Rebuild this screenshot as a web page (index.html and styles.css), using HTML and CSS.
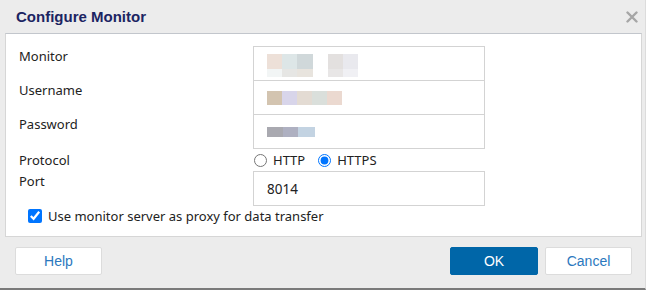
FILE: index.html
```html
<!DOCTYPE html>
<html lang="en">
<head>
    <meta charset="UTF-8">
    <title>Configure Monitor</title>
    <link rel="stylesheet" href="styles.css">
</head>
<body>
    <div class="dialog">
        <header class="titleBar">
            <span class="title">Configure Monitor</span>
            <svg class="closeBtn" width="12" height="12" viewBox="0 0 12 12">
                <path d="M1.5 1.5 L10.5 10.5 M10.5 1.5 L1.5 10.5" stroke="#a6a6a6" stroke-width="2.4" stroke-linecap="round"/>
            </svg>
        </header>
        <section class="panel">
            <div class="formRow">
                <label class="fieldLabel">Monitor</label>
                <div class="field">
                    <span class="blur blurMonitor">
                        <i class="c1"></i><i class="c2"></i><i class="c3"></i>
                        <i class="c4"></i><i class="c5"></i><i class="c6"></i>
                    </span>
                    <span class="blur blurMonitor2">
                        <i class="c7"></i><i class="c8"></i>
                        <i class="c9"></i><i class="c10"></i>
                    </span>
                </div>
            </div>
            <div class="formRow stacked">
                <label class="fieldLabel">Username</label>
                <div class="field">
                    <span class="blur blurUser">
                        <i class="u1"></i><i class="u2"></i><i class="u3"></i><i class="u4"></i><i class="u5"></i>
                    </span>
                </div>
            </div>
            <div class="formRow stacked">
                <label class="fieldLabel">Password</label>
                <div class="field">
                    <span class="blur blurPass">
                        <i class="p1"></i><i class="p2"></i><i class="p3"></i>
                    </span>
                </div>
            </div>
            <div class="formRow protocolRow">
                <label class="fieldLabel">Protocol</label>
                <div class="radios">
                    <label class="radio"><input type="radio" name="protocol" value="http"> HTTP</label>
                    <label class="radio"><input type="radio" name="protocol" value="https" checked> HTTPS</label>
                </div>
            </div>
            <div class="formRow portRow">
                <label class="fieldLabel" for="port">Port</label>
                <input class="field portInput" type="text" id="port" value="8014">
            </div>
            <label class="proxyRow">
                <input type="checkbox" checked>
                <span>Use monitor server as proxy for data transfer</span>
            </label>
        </section>
        <footer class="footer">
            <button class="btn">Help</button>
            <div class="footerRight">
                <button class="btn btnPrimary">OK</button>
                <button class="btn">Cancel</button>
            </div>
        </footer>
    </div>
</body>
</html>
```

FILE: styles.css
```css
*{
    margin: 0;
    padding: 0;
    box-sizing: border-box;
}
body{
    background-color: #ececec;
    font-family: "Noto Sans", "Liberation Sans", sans-serif;
    color: #222;
}
.dialog{
    height: 290px;
    border-bottom: 2px solid #7a7a7a;
    border-right: 1px solid #dcdcdc;
}
.titleBar{
    height: 33px;
    display: flex;
    align-items: center;
    justify-content: space-between;
    padding: 0 7px 0 16px;
}
.title{
    font-family: "Liberation Sans", Arial, sans-serif;
    font-weight: bold;
    font-size: 15px;
    color: #1b2462;
}
.closeBtn{
    display: block;
}
.panel{
    margin: 0 3px 0 5px;
    height: 204px;
    background-color: #fff;
    border: 1px solid #d6d6d6;
    border-top-color: #c2c6cc;
    padding: 12px 0 0 13px;
}
.formRow{
    display: flex;
    align-items: flex-start;
}
.formRow.stacked{
    margin-top: -1px;
}
.fieldLabel{
    width: 234px;
    font-size: 13px;
    line-height: 20px;
}
.field{
    width: 232px;
    height: 35px;
    border: 1px solid #d3d3d3;
    display: flex;
    align-items: center;
    padding-left: 13px;
    gap: 15px;
    font-family: "Noto Sans", sans-serif;
    font-size: 13.5px;
    color: #222;
}
.blur{
    display: grid;
    grid-auto-flow: column;
}
.blur i{
    display: block;
}
.blurMonitor{
    grid-template-columns: 15px 15px 16px;
    grid-template-rows: 15px 8px;
    grid-auto-flow: row;
    margin-top: 4px;
}
.blurMonitor2{
    grid-template-columns: 15px 15px;
    grid-template-rows: 15px 8px;
    grid-auto-flow: row;
    margin-top: 4px;
}
.c1{ background: #ede0d8; }
.c2{ background: #dde6e7; }
.c3{ background: #d0d8da; }
.c4{ background: #f2f5f5; }
.c5{ background: #e6e6e4; }
.c6{ background: #e8e4de; }
.c7{ background: #e3e0df; }
.c8{ background: #e9e9ee; }
.c9{ background: #e8e6e6; }
.c10{ background: #f0f0f4; }
.blurUser{
    grid-template-columns: repeat(5, 15px);
    height: 14px;
}
.u1{ background: #d3c4b0; }
.u2{ background: #d8d5ea; }
.u3{ background: #e3dbd3; }
.u4{ background: #dadfdb; }
.u5{ background: #ebd9d0; }
.blurPass{
    grid-template-columns: 16px 15px 17px;
    height: 10px;
}
.p1{ background: #a9a9b0; }
.p2{ background: #aeb0c1; }
.p3{ background: #c3d3e2; }
.protocolRow{
    height: 22px;
    padding-top: 1px;
}
.radios{
    display: flex;
    gap: 13px;
    margin-left: 1px;
}
.radio{
    display: flex;
    align-items: center;
    font-size: 13px;
    line-height: 20px;
}
.radio input{
    margin: 0 6px 0 0;
    width: 13px;
    height: 13px;
}
.portInput{
    outline: none;
    background: #fff;
}
.proxyRow{
    display: flex;
    align-items: center;
    margin: 0 0 0 9px;
    font-size: 13px;
    line-height: 20px;
}
.proxyRow input{
    width: 14px;
    height: 14px;
    margin-right: 6px;
}
.footer{
    display: flex;
    justify-content: space-between;
    padding: 10px 13px 0 15px;
}
.footerRight{
    display: flex;
    gap: 7px;
}
.btn{
    width: 87px;
    height: 28px;
    background-color: #fff;
    border: 1px solid #dcdcdc;
    border-radius: 2px;
    color: #2b78be;
    font-family: "Liberation Sans", Arial, sans-serif;
    font-size: 14px;
}
.btnPrimary{
    width: 88px;
    background-color: #0066a8;
    border-color: #0066a8;
    color: #fff;
}
```
